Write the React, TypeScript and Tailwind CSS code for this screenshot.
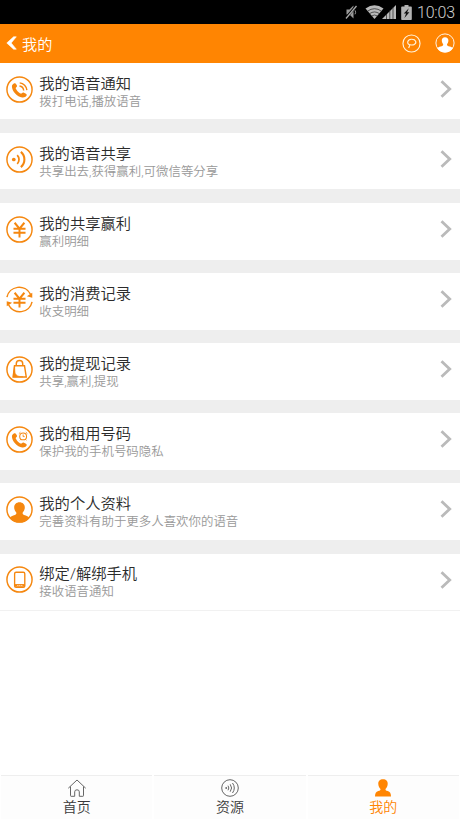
import React from "react";

type IconName = "call" | "sound" | "yen" | "cycle" | "bag" | "rent" | "person" | "phone";

const HANDSET =
  "M7.600 7.300c-1 .6-2 1.500-1.900 2.700.2 4.600 5 10 9.900 10.600 1.800.2 3.300-.3 4.100-1.500.5-.8.3-1.500-.5-2l-1.900-1c-.8-.4-1.400-.2-2 .5-.5.6-1.200.4-1.900-.1-1.700-1.100-3-2.600-3.900-4.300-.3-.6-.1-1 .5-1.400.7-.5.8-1.100.4-1.900l-.9-1.500c-.5-.7-1.100-.7-1.900-.1z";

const Yen = () => (
  <path d="M8.300 6.500l4.700 5.700 4.700-5.700M13 12v8.600M7.200 12.300h11.600M7.200 16.100h11.600" strokeWidth="1.900" />
);

function RowIcon({ name }: { name: IconName }) {
  return (
    <svg viewBox="0 0 26 26" className="size-[27px] shrink-0" fill="none" stroke="#f5870f" strokeWidth="1.400">
      {name !== "cycle" && <circle cx="13" cy="13" r="12.100" />}
      {name === "call" && (
        <>
          <path d={HANDSET} fill="#f5870f" stroke="none" />
          <path d="M13 9.600a4.700 4.700 0 0 1 4 4.300M13.200 6.600a7.600 7.600 0 0 1 6.900 7" strokeWidth="1.400" />
        </>
      )}
      {name === "sound" && (
        <>
          <circle cx="7.500" cy="13" r="1.800" fill="#f5870f" stroke="none" />
          <path d="M10.800 8.800a6 6 0 0 1 0 8.400" strokeWidth="1.700" />
          <path d="M14.300 5.700a9.500 9.500 0 0 1 0 14.600" strokeWidth="2" />
        </>
      )}
      {name === "yen" && <Yen />}
      {name === "cycle" && (
        <>
          <Yen />
          <path d="M.9 10.800A12.100 12.100 0 0 1 23.500 7.800M25.100 15.200A12.100 12.100 0 0 1 2.500 18.200" />
          <path d="M25.300 6.500v4.700l-5.200-1.300zM.7 19.500v-4.700l5.200 1.300z" fill="#f5870f" stroke="none" />
        </>
      )}
      {name === "bag" && (
        <>
          <path d="M8.200 9.300h9.600l1.700 10.900H6.900z" strokeWidth="1.400" />
          <path d="M8.200 9.300L6.800 20.300l9.500-.3c-4 .1-6.600-1.200-7.500-3.500z" fill="#f5870f" strokeWidth=".5" />
          <path d="M9.900 9.600V7.500c0-4.100 6.200-4.100 6.200 0v2.100" />
        </>
      )}
      {name === "rent" && (
        <>
          <path d={HANDSET} fill="#f5870f" stroke="none" />
          <circle cx="16.500" cy="10" r="3.300" strokeWidth="1" />
          <path d="M16.500 8.200v2h1.400M12.400 7.400l1.500-1.400M20.600 7.400l-1.500-1.400M14.300 12.800l-.9 1M18.700 12.800l.9 1" strokeWidth=".9" />
        </>
      )}
      {name === "person" && (
        <path
          d="M13 5.900c-3.200 0-5.300 2.300-5.100 5.400.1 2 .9 3.500 2 4.600.4 1.700-.6 2.200-2.200 2.700-1.700.5-3.200 1.200-4 2.500 2.400 2.700 5.600 4.500 9.300 4.500s6.900-1.800 9.300-4.500c-.8-1.300-2.300-2-4-2.500-1.600-.5-2.600-1-2.200-2.700 1.100-1.100 1.900-2.600 2-4.600.2-3.100-1.900-5.400-5.100-5.400z"
          fill="#f5870f"
          stroke="none"
        />
      )}
      {name === "phone" && (
        <>
          <rect x="8.300" y="6" width="9.800" height="14.600" rx="1.400" strokeWidth="1.300" />
          <path d="M8.300 18.700h9.800" strokeWidth="2.600" />
          <path d="M11 18.800h.9M12.900 18.800h.9M14.800 18.800h.9" stroke="#fff" strokeWidth=".9" />
        </>
      )}
    </svg>
  );
}

const rows: { icon: IconName; title: string; note: string }[] = [
  { icon: "call", title: "我的语音通知", note: "拨打电话,播放语音" },
  { icon: "sound", title: "我的语音共享", note: "共享出去,获得赢利,可微信等分享" },
  { icon: "yen", title: "我的共享赢利", note: "赢利明细" },
  { icon: "cycle", title: "我的消费记录", note: "收支明细" },
  { icon: "bag", title: "我的提现记录", note: "共享,赢利,提现" },
  { icon: "rent", title: "我的租用号码", note: "保护我的手机号码隐私" },
  { icon: "person", title: "我的个人资料", note: "完善资料有助于更多人喜欢你的语音" },
  { icon: "phone", title: "绑定/解绑手机", note: "接收语音通知" },
];

function StatusBar() {
  return (
    <div className="flex h-6 items-center justify-end bg-black pr-[5px]">
      <svg viewBox="0 0 14 16" className="mr-[7px] h-4 w-[14px]" fill="#999">
        <path d="M2.500 5.500h3L9.500 1.500v13l-4-4h-3z" />
        <path d="M12.500 1.500L1.500 14.500" stroke="#000" strokeWidth="2.600" />
        <path d="M12.500 2L2 14.500" stroke="#aaa" strokeWidth="1.300" />
        <path d="M11 6.300q1.300 2 0 4" stroke="#999" fill="none" />
      </svg>
      <svg viewBox="0 0 18 14" className="h-[14px] w-[19px]">
        <path d="M0 3.600Q9-3 18 3.600L9 14z" fill="#b9b9b9" />
        <path d="M2 6.200q7-5 14 0M4 8.700q5-3.500 10 0M6 11q3-2 6 0" fill="none" stroke="#222" strokeWidth=".7" />
      </svg>
      <svg viewBox="0 0 14 14" className="-ml-[2px] h-[14px] w-[14px]">
        <path d="M14 0v14H0z" fill="#b9b9b9" />
        <path d="M4.500 9v5M7.800 5v9M11 2v12" stroke="#222" strokeWidth=".7" />
      </svg>
      <svg viewBox="0 0 11 15" className="ml-[5px] h-[15px] w-[11px]">
        <path d="M3.500 0h4v1.500H10q.8 0 .8.800v12q0 .7-.8.700H1q-.8 0-.8-.7v-12q0-.8.800-.8h2.500z" fill="#b3b3b3" />
        <path d="M7.800 3.200L2.800 8.400h2.300l-1.700 4.500 5-5.600H6.100z" fill="#111" />
      </svg>
      <span className="ml-[5px] mt-[2px] w-[38px] whitespace-nowrap font-['Roboto',sans-serif] text-[16px] font-light leading-6 tracking-[-0.200px] text-[#d0d0d0]">10:03</span>
    </div>
  );
}

function Header() {
  return (
    <header className="flex h-[39px] items-center bg-[#ff8502] pb-px pl-[6px] pr-[5px] text-white">
      <svg viewBox="0 0 11 14" className="h-[14px] w-[11px]" fill="#fff">
        <path d="M7.600.8h2.700L5.200 7l5.100 6.200H7.600L.8 7z" stroke="#fff" strokeWidth=".6" />
      </svg>
      <h1 className="-mt-px ml-[5px] text-[15.200px] leading-[22px]">我的</h1>
      <svg viewBox="0 0 20 20" className="ml-auto size-[19px]" fill="none" stroke="#fff3dd" strokeWidth="1.200">
        <circle cx="10" cy="10" r="9" />
        <path d="M7 14.800l1.400-3.400C5 11 5 5.900 9.800 5.500c5-.3 6.200 4.300 2.800 5.700-1.300.5-2.600.4-3.500.1" />
      </svg>
      <svg viewBox="0 0 20 20" className="ml-[14px] size-5" fill="#fff">
        <circle cx="10" cy="10" r="9.100" fill="none" stroke="#fff" strokeWidth=".9" />
        <path d="M10 4.300C7.900 4.300 6.700 5.700 6.800 7.800c.1 1.500.7 2.700 1.400 3.500.2 1.500-1 1.800-2.600 2.200-1.700.4-2.700 1.100-3.200 2C4 18.200 6.700 19.600 10 19.600s6-1.400 7.800-4.100c-.5-.9-1.500-1.600-3.200-2-1.600-.4-2.800-.7-2.600-2.200.7-.8 1.300-2 1.400-3.500.1-2.100-1.300-3.500-3.400-3.500z" />
      </svg>
    </header>
  );
}

export default function App() {
  return (
    <div className="flex h-[819px] w-[460px] flex-col overflow-hidden bg-white font-['Noto_Sans_CJK_SC',sans-serif] font-[350]">
      <StatusBar />
      <Header />
      <main className="flex flex-col gap-[13.700px] bg-[#eee] font-['Roboto','Noto_Sans_CJK_SC',sans-serif]">
        {rows.map((row) => (
          <div key={row.title} className="flex h-[56.400px] items-start bg-white pl-[6px] pr-2">
            <div className="pt-[12.500px]">
              <RowIcon name={row.icon} />
            </div>
            <div className="ml-[6.300px] flex-1 whitespace-nowrap pt-[10.500px]">
              <div className="text-[15.300px] leading-5 text-[#2b2b2b]">{row.title}</div>
              <div className="text-[12.450px] leading-4 text-[#999]">{row.note}</div>
            </div>
            <svg viewBox="0 0 12 18" className="mt-[17px] h-[18px] w-3" fill="none" stroke="#bababa" strokeWidth="2.800">
              <path d="M1.500 1.300L9.700 9l-8.200 7.700" />
            </svg>
          </div>
        ))}
      </main>
      <div className="h-px bg-[#f1f1f1]" />
      <nav className="mt-auto flex h-11 gap-[2px] px-[1px] text-[14px] leading-5 text-[#3a3a3a]">
        <a className="flex flex-1 flex-col items-center border-t border-[#eee] bg-[#fdfdfd] pt-[2px]">
          <svg viewBox="0 0 20 20" className="size-5" fill="none" stroke="#666" strokeWidth="1">
            <path d="M1.300 10.200L10 2l8.700 8.200M3.500 8.500v9.200q0 .6.600.6h3.600v-4.500q0-2 2.300-2t2.300 2v4.500h3.600q.6 0 .6-.6V8.500" />
          </svg>
          <span className="-mt-[2px]">首页</span>
        </a>
        <a className="flex flex-1 flex-col items-center border-t border-[#eee] bg-[#fdfdfd] pt-[2px]">
          <svg viewBox="0 0 20 20" className="size-5" fill="none" stroke="#666" strokeWidth="1">
            <circle cx="10" cy="10" r="8.300" />
            <circle cx="6.200" cy="10" r=".9" fill="#666" stroke="none" />
            <path d="M8 7.700q1.700 2.300 0 4.600M10.200 6.300q2.800 3.700 0 7.400M12.500 5q3.600 5 0 10" />
          </svg>
          <span className="-mt-[2px]">资源</span>
        </a>
        <a className="flex flex-1 flex-col items-center border-t border-[#eee] bg-[#fdfdfd] pt-[2px] text-[#ff8502]">
          <svg viewBox="0 0 20 20" className="size-5" fill="#ff8502">
            <path d="M10 1.300c-3 0-4.900 2-4.700 4.800.1 2.100.9 3.700 2.200 4.800.2 1.300-.8 1.800-2.200 2.200-2.300.7-3.300 2.500-3.300 5.300h16c0-2.800-1-4.600-3.300-5.300-1.400-.4-2.400-.9-2.200-2.200 1.300-1.100 2.100-2.700 2.200-4.800.2-2.800-1.700-4.800-4.700-4.800z" />
          </svg>
          <span className="-mt-[2px]">我的</span>
        </a>
      </nav>
    </div>
  );
}
